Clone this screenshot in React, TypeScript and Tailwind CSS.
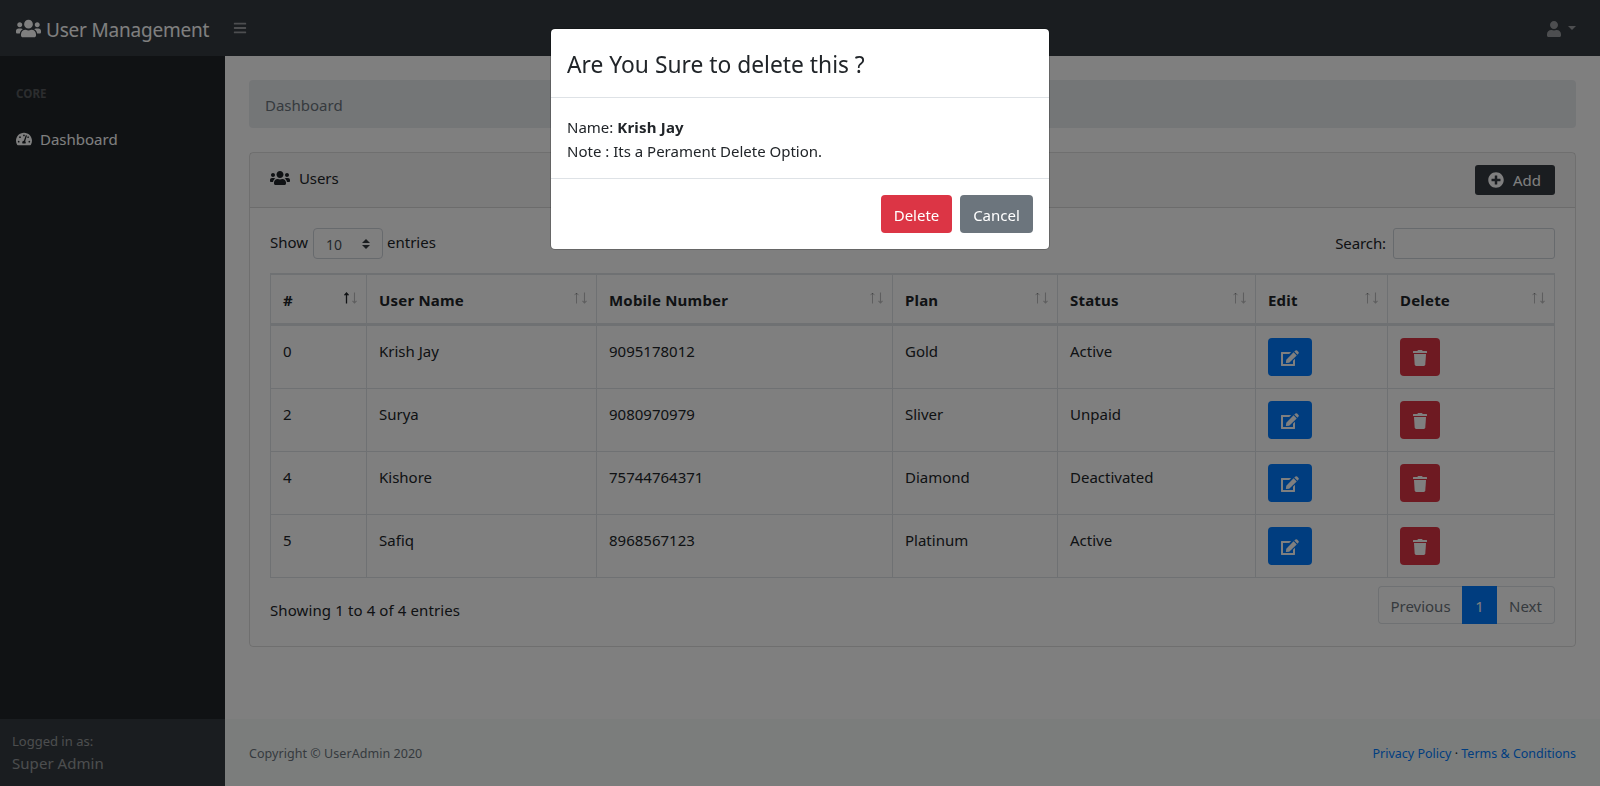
import { FaUsers, FaBars, FaUser, FaTachometerAlt, FaPlusCircle } from "react-icons/fa";

type User = { id: number; name: string; mobile: string; plan: string; status: string };

const users: User[] = [
  { id: 0, name: "Krish Jay", mobile: "9095178012", plan: "Gold", status: "Active" },
  { id: 2, name: "Surya", mobile: "9080970979", plan: "Sliver", status: "Unpaid" },
  { id: 4, name: "Kishore", mobile: "75744764371", plan: "Diamond", status: "Deactivated" },
  { id: 5, name: "Safiq", mobile: "8968567123", plan: "Platinum", status: "Active" },
];

const columns = [
  { label: "#", width: "w-24" },
  { label: "User Name", width: "w-[230px]" },
  { label: "Mobile Number", width: "w-[296px]" },
  { label: "Plan", width: "w-[165px]" },
  { label: "Status", width: "w-[198px]" },
  { label: "Edit", width: "w-[132px]" },
  { label: "Delete", width: "w-[166px]" },
];

function SortArrows({ active }: { active: boolean }) {
  return (
    <svg className="-mt-0.5 h-3 w-3.5 shrink-0" viewBox="0 0 14 12" fill="none" stroke="currentColor">
      <path d="M2.5 11.5V1M0.5 3.2 2.5 1 4.5 3.2" strokeWidth={active ? 1.3 : 1} opacity={active ? 1 : 0.3} />
      <path d="M10.5 0.5V11M8.5 8.8 10.5 11 12.5 8.8" strokeWidth={1.1} opacity={0.3} />
    </svg>
  );
}

function EditIcon() {
  return (
    <svg className="h-4 w-[18px]" viewBox="0 0 18 16" fill="currentColor">
      <path d="M0.4 2H10.2L8.2 4H2V14H12V10.8L14 8.8V15.6L13.6 16H0.4L0 15.6V2.4z" />
      <path d="M12.6 2.3 15.7 5.4 8.2 12.7 5.1 13.1Q4.8 13 4.9 12.7L5.3 9.7z" />
      <path d="M13.3 1.6 14.5 0.5Q15.3 -0.2 16.1 0.5L17.5 1.9Q18.2 2.7 17.5 3.5L16.4 4.7z" />
    </svg>
  );
}

function TrashIcon() {
  return (
    <svg className="h-4 w-3.5" viewBox="0 0 14 16" fill="currentColor">
      <path d="M0.4 1H4.3L4.8 0.3Q5 0 5.4 0H8.6Q9 0 9.2 0.3L9.7 1H13.6Q14 1 14 1.4V3H0V1.4Q0 1 0.4 1z" />
      <path d="M1 4H13L12.3 14.6Q12.2 16 10.8 16H3.2Q1.8 16 1.7 14.6z" />
    </svg>
  );
}

function Navbar() {
  return (
    <nav className="flex h-14 items-center bg-[#343a40] text-white">
      <div className="flex w-[225px] shrink-0 items-center pl-4">
        <FaUsers className="size-[25px]" />
        <span className="ml-[5px] pt-1 text-[19px] leading-7 tracking-[-0.2px] whitespace-nowrap">User Management</span>
      </div>
      <FaBars className="ml-2 size-3.5 text-white/50" />
      <div className="ml-auto flex items-center pr-6 text-white/50">
        <FaUser className="mt-0.5 size-4" />
        <svg className="ml-1.5 h-1 w-2" viewBox="0 0 8 4" fill="currentColor">
          <path d="M0 0h8L4 4z" />
        </svg>
      </div>
    </nav>
  );
}

function Sidebar() {
  return (
    <aside className="flex w-[225px] shrink-0 flex-col bg-[#212529]">
      <div className="px-4 pt-[29px] text-[11.6px] leading-[18px] font-bold text-white/25">CORE</div>
      <a className="mt-[24px] flex items-center px-4 text-white">
        <FaTachometerAlt className="size-4" />
        <span className="ml-2 leading-6">Dashboard</span>
      </a>
      <div className="mt-auto h-[67px] bg-[#343a40] px-3 pt-3 text-white/50">
        <div className="text-[13px] leading-[21px]">Logged in as:</div>
        <div className="-mt-px leading-6 tracking-[0.05px]">Super Admin</div>
      </div>
    </aside>
  );
}

function UsersTable() {
  return (
    <table className="mt-3.5 w-[1285px] table-fixed border-separate border-spacing-0 border border-[#dee2e6]">
      <thead>
        <tr>
          {columns.map((c, i) => (
            <th
              key={c.label}
              className={`${c.width} h-[51px] border-t border-r border-b-2 border-[#dee2e6] p-0 pr-2 pl-3 text-left font-bold last:border-r-0`}
            >
              <div className="flex items-center justify-between">
                <span className="pt-0.5 leading-6 tracking-[0.2px]">{c.label}</span>
                <SortArrows active={i === 0} />
              </div>
            </th>
          ))}
        </tr>
      </thead>
      <tbody>
        {users.map((u) => (
          <tr key={u.id} className="h-[63px] align-top [&>td]:border-t [&>td]:border-r [&>td]:border-[#dee2e6] [&>td]:px-3 [&>td]:pt-[13px] [&>td]:pb-0 [&>td]:leading-6 [&>td:last-child]:border-r-0">
            <td>{u.id}</td>
            <td>{u.name}</td>
            <td>{u.mobile}</td>
            <td>{u.plan}</td>
            <td>{u.status}</td>
            <td>
              <button className="-mt-px flex h-[38px] w-11 items-center justify-center rounded bg-[#007bff] pt-0.5 text-white">
                <EditIcon />
              </button>
            </td>
            <td>
              <button className="-mt-px flex h-[38px] w-10 items-center justify-center rounded bg-[#dc3545] pt-0.5 text-white">
                <TrashIcon />
              </button>
            </td>
          </tr>
        ))}
      </tbody>
    </table>
  );
}

function UsersCard() {
  return (
    <section className="mt-6 h-[495px] rounded border border-black/[0.125]">
      <header className="flex h-[55px] items-start justify-between border-b border-black/[0.125] bg-black/[0.03] px-5 pt-3">
        <div className="flex items-center pt-px">
          <FaUsers className="size-5" />
          <span className="ml-[9px] leading-6 tracking-[-0.1px]">Users</span>
        </div>
        <button className="flex h-[30px] w-20 items-center rounded-[3px] bg-[#343a40] pl-[13px] text-white">
          <FaPlusCircle className="size-4" />
          <span className="ml-[9px] leading-6">Add</span>
        </button>
      </header>
      <div className="px-5 pt-5">
        <div className="flex h-[31px] items-center justify-between">
          <div className="flex items-center">
            <span className="-mt-1 w-[43px] leading-6">Show</span>
            <span className="flex h-[31px] w-[70px] items-center justify-between rounded border border-[#ced4da] pr-3 pl-3 text-[#495057]">
              <span className="pt-0.5 text-[14px]">10</span>
              <svg className="h-2.5 w-2" viewBox="0 0 4 5" fill="#343a40">
                <path d="M2 0 0 2h4zM2 5 0 3h4z" />
              </svg>
            </span>
            <span className="-mt-1 ml-1 leading-6">entries</span>
          </div>
          <label className="flex items-center">
            <span className="-mt-0.5 leading-6 tracking-[-0.1px]">Search:</span>
            <input className="ml-[7px] h-[31px] w-[162px] rounded-[3px] border border-[#ced4da]" />
          </label>
        </div>
        <UsersTable />
        <div className="flex items-start justify-between">
          <div className="pt-5 leading-6 tracking-[0.11px]">Showing 1 to 4 of 4 entries</div>
          <div className="mt-2 flex h-[38px] text-[#6c757d] [&>span]:flex [&>span]:items-center [&>span]:justify-center [&>span]:pt-0.5">
            <span className="w-[84px] rounded-l border border-r-0 border-[#dee2e6]">Previous</span>
            <span className="w-[35px] bg-[#007bff] text-white">1</span>
            <span className="w-[58px] rounded-r border border-l-0 border-[#dee2e6]">Next</span>
          </div>
        </div>
      </div>
    </section>
  );
}

function DeleteModal() {
  return (
    <div className="fixed inset-0 bg-black/50 pt-7">
      <div className="mx-auto h-[222px] w-[500px] rounded-[5px] border border-black/20 bg-white bg-clip-padding">
        <div className="h-[69px] border-b border-[#dee2e6] px-4 pt-[18px] text-[22.8px] leading-9">Are You Sure to delete this ?</div>
        <div className="h-[81px] border-b border-[#dee2e6] px-4 pt-[17px] leading-6">
          <div>
            Name: <b className="tracking-[0.2px]">Krish Jay</b>
          </div>
          <div>Note : Its a Perament Delete Option.</div>
        </div>
        <div className="flex justify-end gap-2 px-4 pt-4 text-white">
          <button className="h-[38px] w-[71px] rounded bg-[#dc3545] pt-0.5">Delete</button>
          <button className="h-[38px] w-[73px] rounded bg-[#6c757d] pt-0.5">Cancel</button>
        </div>
      </div>
    </div>
  );
}

export default function App() {
  return (
    <div className="flex h-[786px] w-[1600px] flex-col overflow-hidden bg-white font-['Noto_Sans',sans-serif] text-[15px] text-[#212529]">
      <Navbar />
      <div className="flex flex-1">
        <Sidebar />
        <div className="flex flex-1 flex-col">
          <main className="flex-1 px-6 pt-6">
            <div className="h-12 rounded bg-[#e9ecef] px-4 pt-[13px] leading-6 text-[#6c757d]">Dashboard</div>
            <UsersCard />
          </main>
          <footer className="flex h-[67px] items-center justify-between bg-[#f6fbf9] px-6 pt-1 text-[12.5px]">
            <div className="tracking-[0.05px] text-[#6c757d]">Copyright © UserAdmin 2020</div>
            <div>
              <a className="text-[#007bff]">Privacy Policy</a> · <a className="text-[#007bff]">Terms &amp; Conditions</a>
            </div>
          </footer>
        </div>
      </div>
      <DeleteModal />
    </div>
  );
}
